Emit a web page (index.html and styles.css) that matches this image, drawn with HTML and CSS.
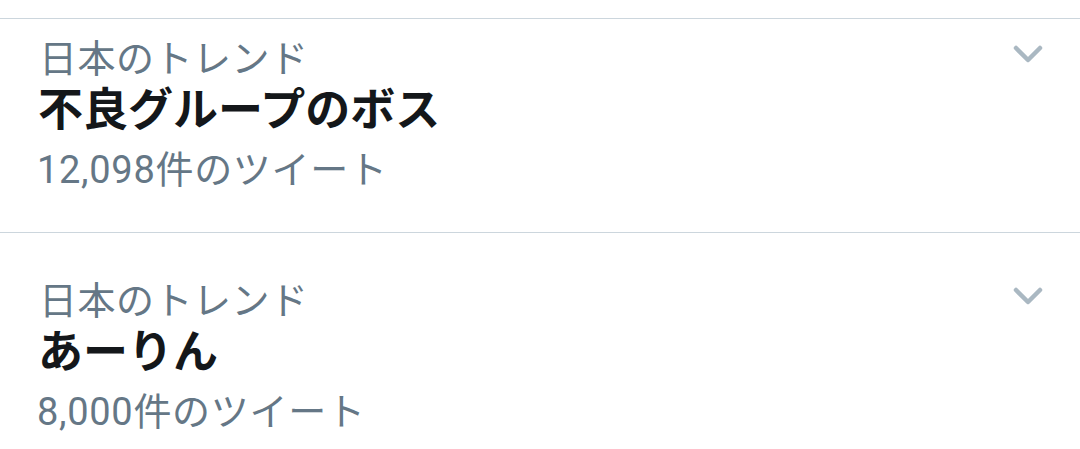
FILE: index.html
```html
<!DOCTYPE html>
<html lang="ja">
<head>
    <meta charset="UTF-8">
    <meta name="viewport" content="width=device-width, initial-scale=1.0">
    <title>日本のトレンド</title>
    <link rel="stylesheet" href="styles.css">
</head>
<body>
    <ul class="trends">
        <li class="trend">
            <div class="trend-head">
                <span class="trend-place">日本のトレンド</span>
                <svg class="chevron" viewBox="0 0 30 18" width="30" height="18">
                    <polyline points="3,3 15,15 27,3" />
                </svg>
            </div>
            <div class="trend-name">不良グループのボス</div>
            <div class="trend-count">12,098件のツイート</div>
        </li>
        <li class="trend">
            <div class="trend-head">
                <span class="trend-place">日本のトレンド</span>
                <svg class="chevron" viewBox="0 0 30 18" width="30" height="18">
                    <polyline points="3,3 15,15 27,3" />
                </svg>
            </div>
            <div class="trend-name">あーりん</div>
            <div class="trend-count">8,000件のツイート</div>
        </li>
    </ul>
</body>
</html>
```

FILE: styles.css
```css
body {
    font-family: Roboto, "Noto Sans CJK JP", sans-serif;
    background-color: #ffffff;
    margin: 0;
    padding-top: 18px;
}
.trends {
    list-style: none;
    margin: 0;
    padding: 0;
    border-top: 1px solid #ccd6dd;
}
.trend {
    padding: 39px 37px 34px 40px;
    border-bottom: 1px solid #ccd6dd;
}
.trend:first-child {
    padding-top: 11px;
}
.trend-head {
    display: flex;
    justify-content: space-between;
    align-items: center;
    height: 50px;
}
.trend-place {
    font-size: 38px;
    letter-spacing: 0.5px;
    color: #657786;
    margin-left: -1px;
}
.chevron {
    margin-top: -2px;
    fill: none;
    stroke: #aab8c2;
    stroke-width: 4.5;
    stroke-linecap: round;
    stroke-linejoin: round;
}
.trend-name {
    font-size: 45px;
    font-weight: bold;
    line-height: 62px;
    color: #14171a;
    margin-left: -2px;
}
.trend-count {
    font-size: 38px;
    line-height: 56px;
    letter-spacing: 0.7px;
    color: #657786;
    margin-left: -3px;
}
```
